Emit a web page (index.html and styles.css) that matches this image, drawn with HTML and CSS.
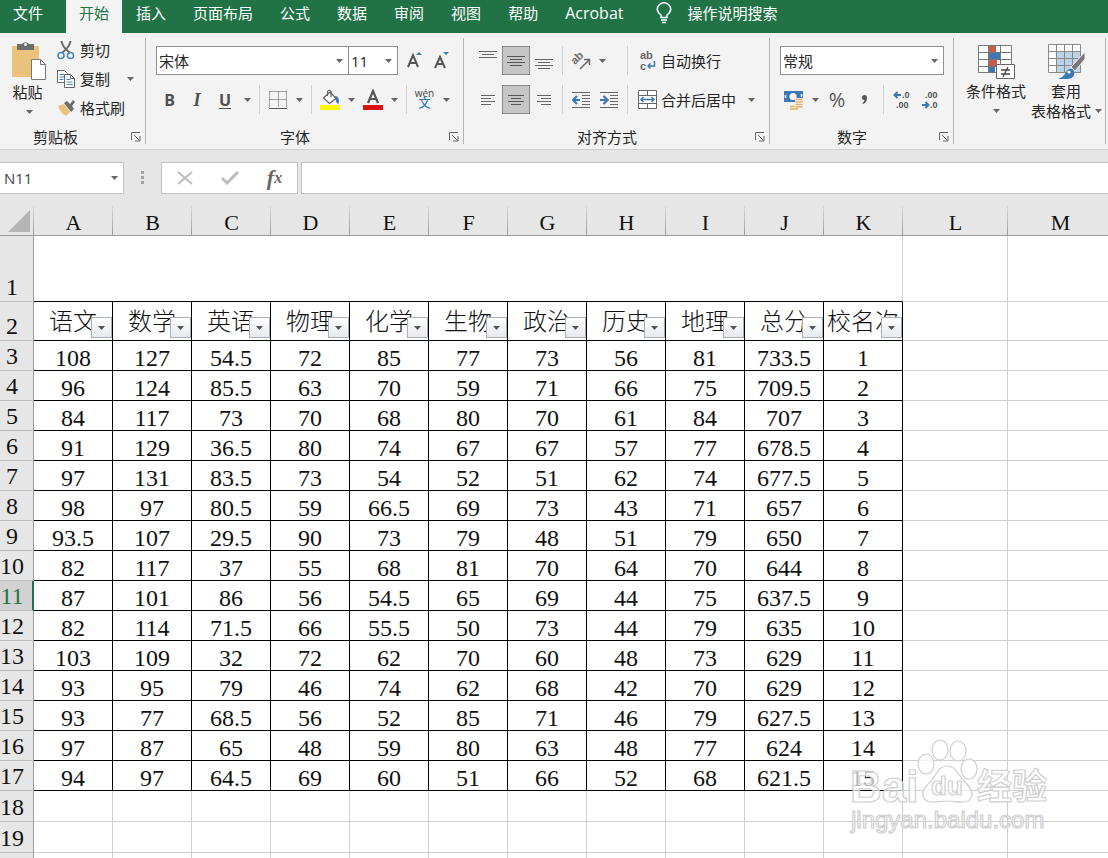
FILE: index.html
```html
<!DOCTYPE html>
<html lang="zh-CN">
<head>
<meta charset="utf-8">
<meta name="viewport" content="width=device-width, initial-scale=1">
<title>Excel</title>
<link rel="stylesheet" href="styles.css">
</head>
<body>
<nav class="tabs">
  <button class="tab tab-file">文件</button>
  <button class="tab tab-active">开始</button>
  <button class="tab">插入</button>
  <button class="tab">页面布局</button>
  <button class="tab">公式</button>
  <button class="tab">数据</button>
  <button class="tab">审阅</button>
  <button class="tab">视图</button>
  <button class="tab">帮助</button>
  <button class="tab acrobat">Acrobat</button>
  <button class="tab tab-search">
    <svg width="16" height="22" viewBox="0 0 16 22" fill="none" stroke="#fff" stroke-width="1.5"><path d="M5 15.5V13C3 11.500 1.300 10 1.300 7.300a6.700 6.500 0 0 1 13.400 0C14.700 10 13 11.500 11 13v2.500z"/><path d="M5 18h6M6 20.500h4"/></svg>
    <span>操作说明搜索</span>
  </button>
</nav>

<div class="ribbon">
  <section class="group">
    <div class="clip">
      <button class="big paste">
        <svg width="36" height="40" viewBox="0 0 36 40"><path d="M1 5h27v31H1z" fill="#eac27c"/><path d="M6 3h5a4 3.500 0 0 1 7 0h5v6H6z" fill="#6d6d6d"/><circle cx="14.500" cy="3.500" r="1.500" fill="#f3f3f3"/><path d="M20.500 18.500h9l5 5v15h-14z" fill="#fff" stroke="#777"/><path d="M29.500 18.500v5h5" fill="none" stroke="#777"/></svg>
        <span>粘贴</span>
        <svg class="caret" width="7" height="4" viewBox="0 0 7 4"><path d="M0 0h7L3.500 4z"/></svg>
      </button>
      <div class="clip-list">
        <button class="item"><svg width="18" height="20" viewBox="0 0 18 20" fill="none"><path d="M4.500 1C5 5 8 9 13 13M13.500 1C13 5 10 9 5 13" stroke="#666" stroke-width="2"/><circle cx="4" cy="15.500" r="3" stroke="#4a86b8" stroke-width="1.500"/><circle cx="13.500" cy="15.500" r="3" stroke="#4a86b8" stroke-width="1.500"/></svg><span>剪切</span></button>
        <button class="item"><svg width="18" height="20" viewBox="0 0 18 20" fill="#fff" stroke="#666"><path d="M.5 1.500h7l3 3v9H.5z"/><path d="M2.500 5.500h5M2.500 8h5M2.500 10.500h4" stroke="#4a86b8"/><path d="M7.500 5.500h6l4 4v9h-10z"/><path d="M13.500 5.500v4h4" fill="none"/><path d="M9.500 10.500h4M9.500 13h6M9.500 15.500h6" stroke="#4a86b8"/></svg><span>复制</span><svg class="caret far" width="7" height="4" viewBox="0 0 7 4"><path d="M0 0h7L3.500 4z"/></svg></button>
        <button class="item"><svg width="18" height="20" viewBox="0 0 18 20"><path d="M1 8l6-2 6 8-4 4C5 16 2 12 1 8z" fill="#eac27c"/><path d="M7 5l3-2 3 3 3-4 2 2-3 4 2 3-3 3z" fill="#6d6d6d"/></svg><span>格式刷</span></button>
      </div>
    </div>
    <footer class="label label-clip"><span>剪贴板</span><button class="launch" aria-label="剪贴板选项"><svg width="10" height="10" viewBox="0 0 10 10" fill="none" stroke="#666"><path d="M.5 8V.5H9M3 3l5.500 5.500M4 9h5V4"/></svg></button></footer>
  </section>

  <section class="group">
    <div class="rows">
      <div class="row">
        <select class="pick pick-font" aria-label="字体"><option>宋体</option></select>
        <select class="pick pick-size" aria-label="字号"><option>11</option></select>
        <button class="tool grow" aria-label="增大字号"><svg width="18" height="20" viewBox="0 0 18 20"><path d="M2 16L7 4l5 12M4 12h6" fill="none" stroke="#555" stroke-width="2"/><path d="M10 4l3-3 3 3z" fill="#3b78b5"/></svg></button>
        <button class="tool" aria-label="减小字号"><svg width="18" height="20" viewBox="0 0 18 20"><path d="M2 17L7 6l5 11M4 13h6" fill="none" stroke="#555" stroke-width="2"/><path d="M10 1h6l-3 3z" fill="#3b78b5"/></svg></button>
      </div>
      <div class="row">
        <button class="tool b">B</button>
        <button class="tool wide i">I</button>
        <button class="tool wide u">U</button>
        <button class="drop" aria-label="下划线选项"><svg class="caret" width="7" height="4" viewBox="0 0 7 4"><path d="M0 0h7L3.500 4z"/></svg></button>
        <i class="sep"></i>
        <button class="tool" aria-label="边框"><svg width="18" height="18" viewBox="0 0 18 18" fill="none" stroke="#555"><path d="M.5.5h17M.5.5v16M9.500.5v16M17.500.5v16M.5 8.500h17" stroke-dasharray="1 1"/><path d="M0 17.500h18"/></svg></button>
        <button class="drop" aria-label="边框选项"><svg class="caret" width="7" height="4" viewBox="0 0 7 4"><path d="M0 0h7L3.500 4z"/></svg></button>
        <i class="sep"></i>
        <button class="tool" aria-label="填充颜色"><svg width="20" height="22" viewBox="0 0 20 22"><path d="M0 16h20v5H0z" fill="#fdf900"/><path d="M3.500 9L10 3l6 6.500-6.500 5z" fill="#fff" stroke="#666" stroke-width="1.300"/><path d="M7.500 7V2.500q1.500-2.500 3.500 0V8" fill="none" stroke="#666" stroke-width="1.200"/><path d="M15 7q5 0 3.500 8-3-1-3.500-8z" fill="#3b78b5"/></svg></button>
        <button class="drop" aria-label="填充颜色选项"><svg class="caret" width="7" height="4" viewBox="0 0 7 4"><path d="M0 0h7L3.500 4z"/></svg></button>
        <button class="tool" aria-label="字体颜色"><svg width="20" height="22" viewBox="0 0 20 22"><path d="M0 16h20v5H0z" fill="#d9130c"/><path d="M5 14l5-12 5 12M7 10h6" fill="none" stroke="#555" stroke-width="2.200"/></svg></button>
        <button class="drop" aria-label="字体颜色选项"><svg class="caret" width="7" height="4" viewBox="0 0 7 4"><path d="M0 0h7L3.500 4z"/></svg></button>
        <i class="sep"></i>
        <button class="tool wen"><span>wén</span><b>文</b></button>
        <button class="drop" aria-label="拼音选项"><svg class="caret" width="7" height="4" viewBox="0 0 7 4"><path d="M0 0h7L3.500 4z"/></svg></button>
      </div>
    </div>
    <footer class="label"><span>字体</span><button class="launch" aria-label="字体设置"><svg width="10" height="10" viewBox="0 0 10 10" fill="none" stroke="#666"><path d="M.5 8V.5H9M3 3l5.500 5.500M4 9h5V4"/></svg></button></footer>
  </section>

  <section class="group">
    <div class="rows">
      <div class="row">
        <button class="tool wide" aria-label="顶端对齐"><svg width="18" height="20" viewBox="0 0 18 20" stroke="#666"><path d="M0 .5h18M3 3.500h12M0 6.500h18"/></svg></button>
        <button class="tool wide on" aria-label="垂直居中"><svg width="18" height="20" viewBox="0 0 18 20" stroke="#555"><path d="M0 5.500h18M3 8.500h12M0 11.500h18M3 14.500h12"/></svg></button>
        <button class="tool wide" aria-label="底端对齐"><svg width="18" height="20" viewBox="0 0 18 20" stroke="#666"><path d="M0 8.500h18M3 11.500h12M0 14.500h18M3 17.500h12"/></svg></button>
        <i class="sep"></i>
        <div class="pair">
          <button class="tool" aria-label="方向"><svg width="20" height="22" viewBox="0 0 20 22"><text class="ab" x="4" y="15" transform="rotate(-45 4 15)">ab</text><path d="M9 19l9-9M13 9.500h5.500V15" fill="none" stroke="#666" stroke-width="1.500"/></svg></button>
          <button class="drop" aria-label="方向选项"><svg class="caret" width="7" height="4" viewBox="0 0 7 4"><path d="M0 0h7L3.500 4z"/></svg></button>
        </div>
        <i class="sep"></i>
        <button class="item cmd"><svg width="20" height="24" viewBox="0 0 20 24"><text class="ab" x="2" y="10">ab</text><text class="ab" x="2" y="21">c</text><path d="M16.500 12v5H10M12.500 14.500L10 17l2.500 2.500" fill="none" stroke="#3b78b5" stroke-width="1.500"/></svg><span>自动换行</span></button>
      </div>
      <div class="row">
        <button class="tool wide" aria-label="左对齐"><svg width="14" height="12" viewBox="0 0 14 12" stroke="#666"><path d="M0 1.500h14M0 4.500h10M0 7.500h14M0 10.500h10"/></svg></button>
        <button class="tool wide on" aria-label="居中"><svg width="16" height="12" viewBox="0 0 16 12" stroke="#555"><path d="M0 1.500h16M3 4.500h10M0 7.500h16M3 10.500h10"/></svg></button>
        <button class="tool wide" aria-label="右对齐"><svg width="14" height="12" viewBox="0 0 14 12" stroke="#666"><path d="M0 1.500h14M4 4.500h10M0 7.500h14M4 10.500h10"/></svg></button>
        <i class="sep"></i>
        <div class="pair">
          <button class="tool wide" aria-label="减少缩进"><svg width="18" height="18" viewBox="0 0 18 18" fill="none" stroke="#666"><path d="M0 1.500h18M10 4.500h8M10 7.500h8M10 10.500h8M10 13.500h8M0 16.500h18"/><path d="M8 9H1.500M5 5L1 9l4 4" stroke="#3b78b5" stroke-width="2.200"/></svg></button>
          <button class="tool wide" aria-label="增加缩进"><svg width="18" height="18" viewBox="0 0 18 18" fill="none" stroke="#666"><path d="M0 1.500h18M10 4.500h8M10 7.500h8M10 10.500h8M10 13.500h8M0 16.500h18"/><path d="M0 9h6.500M3.500 5l4 4-4 4" stroke="#3b78b5" stroke-width="2.200"/></svg></button>
        </div>
        <i class="sep"></i>
        <button class="item cmd"><svg width="20" height="20" viewBox="0 0 20 20" fill="none" stroke="#666"><path d="M.5.5h18v18H.5zM.5 5.500h18M.5 13.500h18M9.500.5v5M9.500 13.500v5" fill="#fff"/><path d="M3 9.500h13M5.500 7L3 9.500 5.500 12M13.500 7L16 9.500 13.500 12" stroke="#3b78b5" stroke-width="1.500"/></svg><span>合并后居中</span><svg class="caret far" width="7" height="4" viewBox="0 0 7 4"><path d="M0 0h7L3.500 4z"/></svg></button>
      </div>
    </div>
    <footer class="label"><span>对齐方式</span><button class="launch" aria-label="对齐设置"><svg width="10" height="10" viewBox="0 0 10 10" fill="none" stroke="#666"><path d="M.5 8V.5H9M3 3l5.500 5.500M4 9h5V4"/></svg></button></footer>
  </section>

  <section class="group">
    <div class="rows rows-number">
      <div class="row">
        <select class="pick pick-number" aria-label="数字格式"><option>常规</option></select>
      </div>
      <div class="row">
        <button class="tool" aria-label="会计数字格式"><svg width="20" height="20" viewBox="0 0 20 20"><path d="M0 1h19v11H0z" fill="#3b78b5"/><circle cx="9" cy="6.500" r="3.500" fill="#fff"/><path d="M1.500 5v3M17.500 4v3" stroke="#fff" stroke-width="1.500"/><path d="M11 8h8v12H5v-5h6z" fill="#f3f3f3"/><path d="M11.500 9.500h7M11.500 12h7M11.500 14.500h7M11.500 17h7M6 16.500h5M6 19h8" stroke="#e3b264" stroke-width="1.600"/></svg></button>
        <button class="drop" aria-label="货币选项"><svg class="caret" width="7" height="4" viewBox="0 0 7 4"><path d="M0 0h7L3.500 4z"/></svg></button>
        <button class="tool wide pct">%</button>
        <button class="tool wide" aria-label="千位分隔样式"><svg width="8" height="12" viewBox="0 0 8 12"><path d="M1 3.500a2.500 2.500 0 0 1 5 0q0 5-4 6.500l-.7-1Q3.500 8 3.500 6 1 6 1 3.500z" fill="#555"/></svg></button>
        <i class="sep"></i>
        <button class="tool wide" aria-label="增加小数位数"><svg width="18" height="22" viewBox="0 0 18 22"><path d="M8 6H2M4.500 3L1.500 6l3 3" fill="none" stroke="#3b78b5" stroke-width="2"/><text class="dec" x="9" y="9">.0</text><text class="dec" x="3" y="19">.00</text></svg></button>
        <button class="tool wide" aria-label="减少小数位数"><svg width="18" height="22" viewBox="0 0 18 22"><path d="M1 16h6M4.500 13l3 3-3 3" fill="none" stroke="#3b78b5" stroke-width="2"/><text class="dec" x="4" y="9">.00</text><text class="dec" x="9" y="19">.0</text></svg></button>
      </div>
    </div>
    <footer class="label"><span>数字</span><button class="launch" aria-label="数字设置"><svg width="10" height="10" viewBox="0 0 10 10" fill="none" stroke="#666"><path d="M.5 8V.5H9M3 3l5.500 5.500M4 9h5V4"/></svg></button></footer>
  </section>

  <section class="group styles">
    <button class="big">
      <svg width="38" height="36" viewBox="0 0 38 36"><path d="M1.500 1.500h33v27h-33z" fill="#fff"/><path d="M12 2h7v6h-7zM12 15h8v7h-8z" fill="#cd5a48"/><path d="M12 8h11v7H12zM12 22h6v6h-6z" fill="#3b78b5"/><path d="M1.500 1.500h33v27h-33zM1.500 8.500h33M1.500 15.500h33M1.500 22.500h33M11.500 1.500v27M23.500 1.500v27" fill="none" stroke="#777"/><path d="M19.500 20.500h18v14h-18z" fill="#fff" stroke="#666"/><path d="M24 26h9M24 30h9M31 23l-5 10" stroke="#444" stroke-width="1.300"/></svg>
      <span>条件格式</span>
      <svg class="caret" width="7" height="4" viewBox="0 0 7 4"><path d="M0 0h7L3.500 4z"/></svg>
    </button>
    <button class="big big-table">
      <svg width="38" height="36" viewBox="0 0 38 36"><path d="M1.500.5h32v28h-32z" fill="#fff"/><path d="M10 7h23v21H10z" fill="#bcd3e8"/><path d="M1.500.5h32v28h-32zM1.500 7.500h32M1.500 14.500h32M1.500 21.500h32M9.500.5v28M17.500.5v28M25.500.5v28" fill="none" stroke="#888"/><path d="M38 8L24 23l4 4 10-12z" fill="#777" stroke="#f3f3f3"/><path d="M11 35q6-2 8-7 4-6 8-1 2 8-9 8z" fill="#3b78b5"/><path d="M20 28q2-3 4 0l-2 2z" fill="#fff"/></svg>
      <span class="line-top">套用</span>
      <span class="line">表格格式<svg class="caret" width="7" height="4" viewBox="0 0 7 4"><path d="M0 0h7L3.500 4z"/></svg></span>
    </button>
  </section>
</div>

<div class="formula">
  <select class="namebox" aria-label="名称框"><option>N11</option></select>
  <svg class="grip" width="4" height="14" viewBox="0 0 4 14" fill="#a3a3a3"><path d="M0 0h3v3H0zM0 5h3v3H0zM0 10h3v3H0z"/></svg>
  <div class="actions">
    <button aria-label="取消"><svg width="16" height="14" viewBox="0 0 16 14" stroke="#bdbdbd" stroke-width="2"><path d="M1 1l14 12M15 1L1 13"/></svg></button>
    <button aria-label="输入"><svg width="18" height="14" viewBox="0 0 18 14" fill="none" stroke="#bdbdbd" stroke-width="3"><path d="M1 7l5 5L17 1"/></svg></button>
    <button class="fx" aria-label="插入函数">f<small>x</small></button>
  </div>
  <input class="entry" type="text" aria-label="编辑栏">
</div>

<main class="sheet">
<table class="grid">
<colgroup><col class="c-head"><col class="c-data" span="11"><col class="c-wide" span="2"></colgroup>
<thead>
<tr><th class="corner"><svg width="22" height="22" viewBox="0 0 22 22"><path d="M22 0v22H0z" fill="#b5b5b5"/></svg><th>A<th>B<th>C<th>D<th>E<th>F<th>G<th>H<th>I<th>J<th>K<th>L<th>M</tr>
</thead>
<tbody class="title"><tr><th>1<td colspan="11"><td><td></tr></tbody>
<tbody class="data">
<tr class="names"><th>2
<td>语文<button class="filter" aria-label="筛选语文"></button>
<td>数学<button class="filter" aria-label="筛选数学"></button>
<td>英语<button class="filter" aria-label="筛选英语"></button>
<td>物理<button class="filter" aria-label="筛选物理"></button>
<td>化学<button class="filter" aria-label="筛选化学"></button>
<td>生物<button class="filter" aria-label="筛选生物"></button>
<td>政治<button class="filter" aria-label="筛选政治"></button>
<td>历史<button class="filter" aria-label="筛选历史"></button>
<td>地理<button class="filter" aria-label="筛选地理"></button>
<td>总分<button class="filter" aria-label="筛选总分"></button>
<td>校名次<button class="filter" aria-label="筛选校名次"></button>
<td><td></tr>
<tr><th>3<td>108<td>127<td>54.5<td>72<td>85<td>77<td>73<td>56<td>81<td>733.5<td>1<td><td></tr>
<tr><th>4<td>96<td>124<td>85.5<td>63<td>70<td>59<td>71<td>66<td>75<td>709.5<td>2<td><td></tr>
<tr><th>5<td>84<td>117<td>73<td>70<td>68<td>80<td>70<td>61<td>84<td>707<td>3<td><td></tr>
<tr><th>6<td>91<td>129<td>36.5<td>80<td>74<td>67<td>67<td>57<td>77<td>678.5<td>4<td><td></tr>
<tr><th>7<td>97<td>131<td>83.5<td>73<td>54<td>52<td>51<td>62<td>74<td>677.5<td>5<td><td></tr>
<tr><th>8<td>98<td>97<td>80.5<td>59<td>66.5<td>69<td>73<td>43<td>71<td>657<td>6<td><td></tr>
<tr><th>9<td>93.5<td>107<td>29.5<td>90<td>73<td>79<td>48<td>51<td>79<td>650<td>7<td><td></tr>
<tr><th>10<td>82<td>117<td>37<td>55<td>68<td>81<td>70<td>64<td>70<td>644<td>8<td><td></tr>
<tr class="current"><th>11<td>87<td>101<td>86<td>56<td>54.5<td>65<td>69<td>44<td>75<td>637.5<td>9<td><td></tr>
<tr><th>12<td>82<td>114<td>71.5<td>66<td>55.5<td>50<td>73<td>44<td>79<td>635<td>10<td><td></tr>
<tr><th>13<td>103<td>109<td>32<td>72<td>62<td>70<td>60<td>48<td>73<td>629<td>11<td><td></tr>
<tr><th>14<td>93<td>95<td>79<td>46<td>74<td>62<td>68<td>42<td>70<td>629<td>12<td><td></tr>
<tr><th>15<td>93<td>77<td>68.5<td>56<td>52<td>85<td>71<td>46<td>79<td>627.5<td>13<td><td></tr>
<tr><th>16<td>97<td>87<td>65<td>48<td>59<td>80<td>63<td>48<td>77<td>624<td>14<td><td></tr>
<tr><th>17<td>94<td>97<td>64.5<td>69<td>60<td>51<td>66<td>52<td>68<td>621.5<td>15<td><td></tr>
</tbody>
<tbody class="blank">
<tr><th>18<td><td><td><td><td><td><td><td><td><td><td><td><td></tr>
<tr><th>19<td><td><td><td><td><td><td><td><td><td><td><td><td></tr>
<tr><th><td><td><td><td><td><td><td><td><td><td><td><td><td></tr>
</tbody>
</table>
<svg class="mark" width="208" height="100" viewBox="0 0 208 100">
  <g class="mark-shape">
    <ellipse cx="80" cy="26" rx="8" ry="10"/><ellipse cx="94" cy="12" rx="8" ry="10"/><ellipse cx="112" cy="13" rx="8" ry="10"/><ellipse cx="123" cy="31" rx="8" ry="10"/>
    <path d="M101 28c9 0 11 9 18 16 6 6 9 11 6 16-4 7-14 3-24 3s-19 4-23-3c-3-6 0-10 6-16 7-7 8-16 17-16z"/>
  </g>
  <g class="mark-text">
    <text class="mark-name" x="4" y="64">Bai</text>
    <text class="mark-du" x="85" y="57">du</text>
    <text class="mark-cn" x="131" y="61">经验</text>
    <text class="mark-url" x="5" y="90">jingyan.baidu.com</text>
  </g>
</svg>
</main>
</body>
</html>
```

FILE: styles.css
```css
* { box-sizing: border-box; }

body {
  margin: 0;
  height: 100vh;
  display: flex;
  flex-direction: column;
  overflow: hidden;
  background: #fff;
  color: #262626;
  font: 15px/20px "Open Sans", "Noto Sans CJK SC", sans-serif;
}

button, select, input { font: inherit; color: inherit; margin: 0; padding: 0; border: 0; background: none; border-radius: 0; }
button { white-space: nowrap; }
svg { display: block; flex: none; }

/* tab strip */
.tabs { display: flex; flex: none; gap: 1px; height: 33px; background: #217346; }
.tab { padding: 0 13px 8px; color: #fff; }
.tab-file { margin-right: 9px; }
.tab-active { background: #f3f3f3; color: #217346; }
.tab.acrobat { font-size: 16px; }
.tab-search { display: flex; align-items: center; gap: 15px; margin-left: 6px; }

/* ribbon */
.ribbon { display: flex; flex: none; padding: 5px 0; background: #f3f3f3; border-bottom: 1px solid #cfcfcf; }
.group { display: flex; flex-direction: column; justify-content: space-between; height: 106px; border-right: 1px solid #b5b5b5; }
.rows { display: flex; flex-direction: column; gap: 10px; padding: 8px 8px 0 10px; }
.rows-number { padding-right: 9px; }
.row { display: flex; height: 29px; }
.label { display: flex; align-items: center; line-height: 14px; padding-right: 4px; }
.label span { flex: 1; text-align: center; }
.label-clip span { padding-right: 15px; }
.launch { width: 10px; height: 10px; margin-left: 5px; }

.tool { display: flex; align-items: center; justify-content: center; width: 27px; }
.wide { width: 28px; }
.on { background: #c6c6c6; border: 1px solid #8a8a8a; }
.drop { display: flex; align-items: center; justify-content: center; width: 16px; }
.sep { width: 1px; margin: 0 4px; background: #d0d0d0; }
.pair { display: flex; width: 56px; }
.grow { margin-left: 3px; }
.caret { fill: #666; }
.b, .i, .u { color: #505050; font-weight: 700; font-size: 16px; }
.i { font-family: "Liberation Serif", serif; font-style: italic; font-size: 18px; }
.u { text-decoration: underline; text-underline-offset: 2px; }
.wen { flex-direction: column; color: #444; font-size: 10px; line-height: 9px; }
.wen b { color: #3b78b5; font-size: 12px; font-weight: 500; line-height: 12px; }
.pct { color: #555; font-size: 20px; }
.ab { font: 700 11px "Liberation Sans", sans-serif; fill: #666; }
.dec { font: 700 9px "Liberation Sans", sans-serif; fill: #555; }

.pick, .namebox {
  appearance: none;
  border: 1px solid #8f8f8f;
  padding-left: 2px;
  background: #fff url("data:image/svg+xml,%3Csvg xmlns='http://www.w3.org/2000/svg' width='7' height='4'%3E%3Cpath d='M0 0h7L3.500 4z' fill='%23666'/%3E%3C/svg%3E") no-repeat right 5px center;
}
.pick-font { width: 193px; }
.pick-size { width: 50px; margin-left: -1px; }
.pick-number { width: 164px; }

.item { display: flex; align-items: center; }
.item .far { margin-left: 12px; }
.cmd { padding: 0 6px 0 6px; gap: 3px; }
.cmd .far { margin-left: 9px; }

.clip { display: flex; width: 145px; }
.clip-list { display: flex; flex-direction: column; gap: 5px; }
.clip-list .item { height: 24px; gap: 5px; }
.big { display: flex; flex-direction: column; align-items: center; width: 70px; padding-top: 6px; }
.big > svg:first-child { margin-bottom: 1px; }
.big > .caret { margin-top: 8px; }
.paste { width: 57px; padding: 3px 0 0 1px; }
.paste > span { margin-right: 3px; }
.styles { flex-direction: row; justify-content: flex-start; align-items: flex-start; padding-left: 7px; }
.big-table { width: 74px; align-items: flex-start; }
.big-table > svg:first-child { margin-left: 16px; }
.line-top { margin-left: 20px; }
.line { display: flex; align-items: center; gap: 4px; }

/* formula bar */
.formula { display: flex; flex: none; align-items: center; height: 56px; background: #e6e6e6; }
.namebox { width: 124px; height: 32px; padding-left: 4px; border: 1px solid #c3c3c3; border-left: 0; color: #444; }
.grip { margin: 0 16px 0 17px; }
.actions { display: flex; width: 137px; height: 32px; background: #fff; border: 1px solid #c3c3c3; }
.actions button { flex: 1; display: flex; align-items: center; justify-content: center; }
.fx { color: #666; font: italic 700 22px "Liberation Serif", serif; }
.fx small { font-size: 16px; }
.entry { flex: 1; min-width: 0; height: 32px; margin-left: 3px; padding: 0 6px; background: #fff; border: 1px solid #c3c3c3; border-right: 0; }

/* worksheet */
.sheet { position: relative; flex: 1; min-height: 0; overflow: hidden; }
.grid {
  width: 100%;
  table-layout: fixed;
  border-collapse: separate;
  border-spacing: 0;
  font: 24px/26px "Liberation Serif", "Noto Sans CJK SC", serif;
  color: #111;
}
.c-head { width: 34px; }
.c-data { width: 79px; }
.c-wide { width: 105px; }
.grid th, .grid td { padding: 0; border: 0 solid #d0d0d0; border-width: 0 1px 1px 0; text-align: center; vertical-align: bottom; font-weight: 400; white-space: nowrap; }
.grid thead th {
  height: 30px;
  border-right: 0;
  border-bottom-color: #9b9b9b;
  font-size: 22px;
  line-height: 24px;
  background: linear-gradient(#d8d8d8, #9b9b9b) no-repeat right / 1px 100% #e6e6e6;
}
.grid thead .corner { padding: 0 0 3px 8px; }
.grid tbody th { padding: 0 9px 1px 0; background: #e6e6e6; border-right-color: #9b9b9b; border-bottom-color: #bdbdbd; }
.title th, .title td { height: 66px; }
.grid .title th + td { border-bottom-color: #000; }
.data th, .data td { height: 30px; }
.grid .data td:nth-child(-n+12) { border-color: #000; }
.grid .data td { position: relative; line-height: 24px; }
.grid .names th, .grid .names td { height: 39px; }
.grid .names td { vertical-align: bottom; line-height: 36px; overflow: hidden; font-weight: 300; }
.grid .current th { background: #d2d2d2; color: #217346; border-right: 2px solid #217346; padding-right: 8px; }
.blank th, .blank td { height: 31px; }

.filter {
  position: absolute;
  right: 0;
  bottom: 2px;
  width: 21px;
  height: 21px;
  border: 1px solid #a9b0b8;
  background:
    url("data:image/svg+xml,%3Csvg xmlns='http://www.w3.org/2000/svg' width='7' height='4'%3E%3Cpath d='M0 0h7L3.500 4z' fill='%23555'/%3E%3C/svg%3E") no-repeat center,
    linear-gradient(#fff, #e6e9ee);
}

/* logo stamp over the grid */
.mark { position: absolute; right: 54px; bottom: 20px; }
.mark-shape, .mark-text { fill: #fff; fill-opacity: .7; stroke: #cfcfcf; stroke-width: 1.200; }
.mark-text { font-family: "Liberation Sans", "Noto Sans CJK SC", sans-serif; font-weight: 700; }
.mark-name { font-size: 44px; }
.mark-du { font-size: 26px; }
.mark-cn { font-size: 35px; }
.mark-url { font-size: 24px; font-weight: 400; }
```
